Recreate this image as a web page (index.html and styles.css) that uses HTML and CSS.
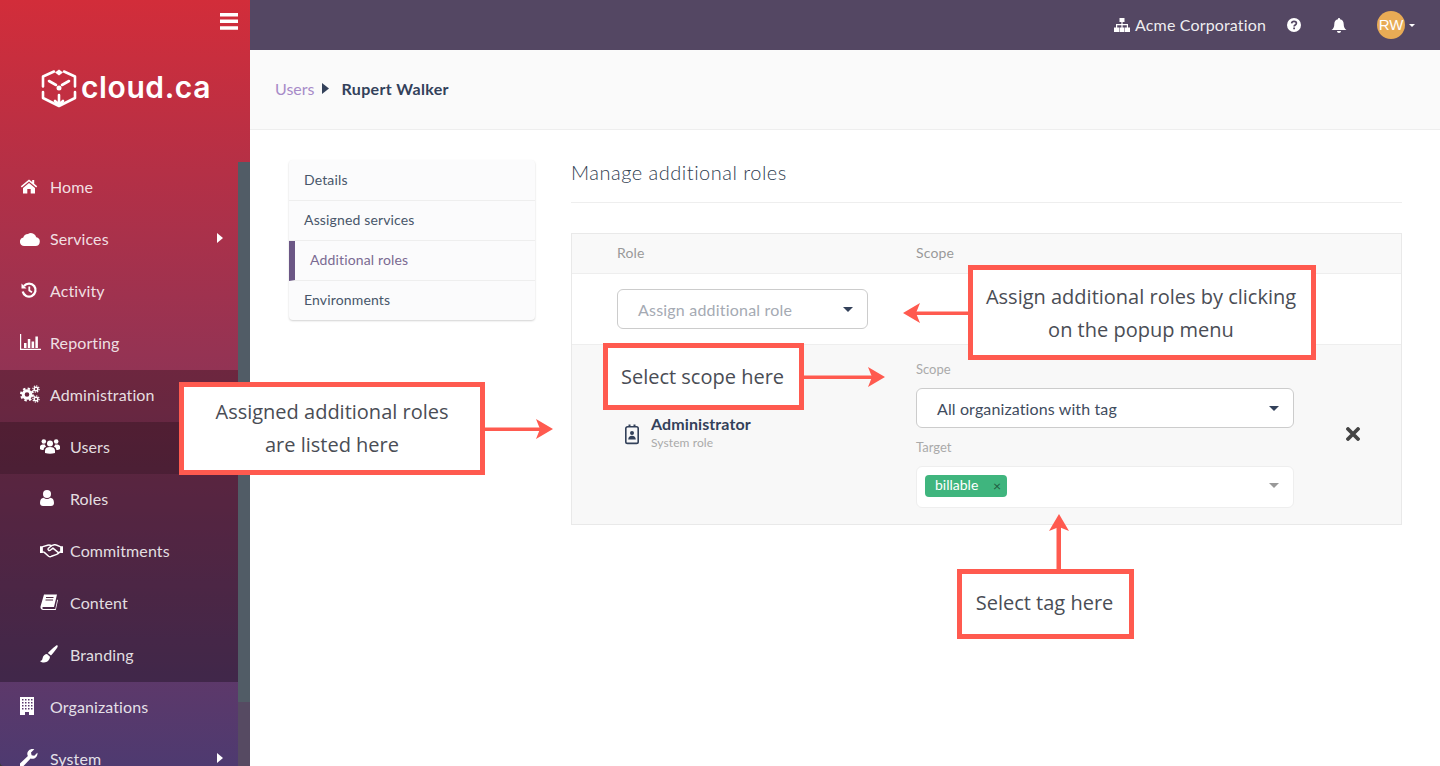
FILE: index.html
```html
<!DOCTYPE html>
<html lang="en">
<head>
  <meta charset="UTF-8">
  <meta name="viewport" content="width=device-width, initial-scale=1.0">
  <title>Rupert Walker - Additional roles</title>
  <link rel="stylesheet" href="styles.css">
</head>
<body>
  <div class="app">
    <aside class="sidebar">
      <div class="brand">
        <div class="menu-toggle">
          <svg width="20" height="17" viewBox="0 0 20 17"><path fill="#fff" d="M1 0h18v3.4H1zM1 6.6h18V10H1zM1 13.300h18v3.400H1z"/></svg>
        </div>
        <div class="logo">
          <svg class="logo-mark" width="38" height="40" viewBox="0 0 38 40" fill="none" stroke="#fff" stroke-width="2.600" stroke-linecap="round" stroke-linejoin="round">
            <path d="M14 3.500 3 8.500v10M24 3.500l11 5v10M3 24v6l16 8 16-8v-6"/>
            <path d="M9 13l7 4M29 13l-7 4M19 27v10M15 33l4 4 4-4"/>
            <path d="M19 1.500l-4 3 4 3 4-3z" fill="#fff" stroke="none"/>
            <circle cx="19" cy="20" r="2.500" fill="#fff" stroke="none"/>
          </svg>
          <span class="logo-text">cloud.ca</span>
        </div>
      </div>
      <div class="sidebar-body">
        <nav class="nav">
          <a class="nav-item">
            <svg class="nav-icon" viewBox="0 0 18 18"><path d="M9 2.500 0.800 9.300l1 1.200L9 4.600l7.200 5.900 1-1.200-3-2.500V3h-2v2.100z"/><path d="M9 6 3 11v5.500h4.300V12h3.400v4.500H15V11z"/></svg>
            Home
          </a>
          <a class="nav-item">
            <svg class="nav-icon icon-wide" viewBox="0 0 20 18"><path d="M4.300 17a4.300 4.300 0 0 1-1-8.500A4.800 4.800 0 0 1 8 5a5.500 5.500 0 0 1 8.300 3.300A4.400 4.400 0 0 1 15.500 17z"/></svg>
            Services
            <svg class="nav-caret" width="6" height="10" viewBox="0 0 6 10"><path d="M0 0l6 5-6 5z"/></svg>
          </a>
          <a class="nav-item">
            <svg class="nav-icon" viewBox="0 0 18 18"><g fill="none" stroke="#fff" stroke-width="2.300"><path d="M4 5a6.500 6.500 0 1 1-1.300 5.500"/><path d="M9.300 5.500v4l2.700 1.700" stroke-width="1.800"/></g><path d="M1.500 2.500v5h5z"/></svg>
            Activity
          </a>
          <a class="nav-item">
            <svg class="nav-icon icon-report" viewBox="0 0 21 18"><path d="M0 1h1.200v14.800H21V17H0z"/><path d="M4 10h2.500v5H4zM7.800 6h2.500v9H7.800zM11.600 8.500h2.500V15h-2.500zM15.400 3.500h2.500V15h-2.500z"/></svg>
            Reporting
          </a>
          <a class="nav-item nav-open">
            <svg class="nav-icon icon-wide" viewBox="0 0 20 18"><g fill="none" stroke="#fff"><circle cx="7" cy="9.500" r="3.800" stroke-width="3"/><circle cx="7" cy="9.500" r="6" stroke-width="2" stroke-dasharray="2.400 2.300"/><circle cx="16" cy="4" r="1.800" stroke-width="1.400"/><circle cx="16" cy="4" r="3.100" stroke-width="1.200" stroke-dasharray="1.300 1.100"/><circle cx="16" cy="14" r="1.800" stroke-width="1.400"/><circle cx="16" cy="14" r="3.100" stroke-width="1.200" stroke-dasharray="1.300 1.100"/></g></svg>
            Administration
          </a>
          <div class="subnav">
            <a class="nav-item sub-item sub-active">
              <svg class="nav-icon icon-wide" viewBox="0 0 20 18"><circle cx="10" cy="6.500" r="3"/><path d="M5 16v-2.500C5 11 7 10 10 10s5 1 5 3.500V16q-5 1.500-10 0z"/><circle cx="3.800" cy="4.500" r="2.300"/><circle cx="16.200" cy="4.500" r="2.300"/><path d="M0 12v-2.500C0 8 1.500 7.400 4 7.400c.3 0 .8 0 1 .1.100 1 .5 1.700 1.100 2.300C4.500 10.300 3.700 11.200 3.600 13 2 13 .8 12.700 0 12zM20 12V9.500C20 8 18.500 7.400 16 7.400c-.3 0-.8 0-1 .1-.1 1-.5 1.700-1.100 2.300 1.600.5 2.400 1.400 2.500 3.200 1.600 0 2.800-.3 3.600-1z"/></svg>
              Users
            </a>
            <a class="nav-item sub-item">
              <svg class="nav-icon" viewBox="0 0 18 18"><circle cx="7" cy="5" r="4"/><path d="M0 14c0-3.500 1.500-5 3.700-5.200C4.600 9.600 5.700 10 7 10s2.400-.4 3.300-1.200C12.500 9 14 10.500 14 14c0 2-1.200 3-3 3H3c-1.800 0-3-1-3-3z"/></svg>
              Roles
            </a>
            <a class="nav-item sub-item">
              <svg class="nav-icon icon-hands" viewBox="0 0 24 18"><path d="M0 5h3v7H0zM21 5h3v7h-3z"/><g fill="none" stroke="#fff" stroke-width="1.500" stroke-linejoin="round" stroke-linecap="round"><path d="M3 5.500 8 4q2-.5 4 .5l3-1q1-.2 2 .3l4 1.700"/><path d="M12 4.500 8.500 7.500q-.5 1 .5 1.800 1 .7 2-.3L13.500 7l6 5 1.500-1"/><path d="M3 11l1.500.5 4.500 4q1.500 1 3 0l5.500-2q1.500-.5 2-1.500"/></g></svg>
              Commitments
            </a>
            <a class="nav-item sub-item">
              <svg class="nav-icon" viewBox="0 0 18 18"><path d="M4 1.500h13l-3 12.500H3.500c-.8 0-1.300 .6-1.100 1.200.1.500.6.800 1.100.8h11.800l2-9.500.7.500-2.200 10H3.300C1.500 17 .2 15.500.5 13.500z"/><path d="M6 4.500h7.500M5.500 7h7.500" stroke="#4f2a40" stroke-width="1.100"/></svg>
              Content
            </a>
            <a class="nav-item sub-item">
              <svg class="nav-icon" viewBox="0 0 18 18"><path d="M17.500.5c.5.500.2 1.500-.5 2.500-1.500 2.300-4 5.300-6 7.500L7.800 8C10 5.800 13 3 15 1.500c1-.8 2-1.400 2.500-1z"/><path d="M7 9l3 2.800c-.2 3-2.500 5.700-6 5.700-1.500 0-3-.5-4-1.500 1.500-.2 2.300-1 2.500-2.500C3 10.500 5 9.200 7 9z"/></svg>
              Branding
            </a>
          </div>
          <a class="nav-item">
            <svg class="nav-icon" viewBox="2 0 18 18"><path fill-rule="evenodd" d="M2 0h14v18h-5v-3H7v3H2zM4 2v1.500h1.500V2zm3 0v1.500h1.500V2zm3 0v1.500h1.500V2zm3 0v1.500h1.500V2zM4 5v1.500h1.500V5zm3 0v1.500h1.500V5zm3 0v1.500h1.500V5zm3 0v1.500h1.500V5zM4 8v1.500h1.500V8zm3 0v1.500h1.500V8zm3 0v1.500h1.500V8zm3 0v1.500h1.500V8zM4 11v1.500h1.500V11zm3 0v1.500h1.500V11zm3 0v1.500h1.500V11zm3 0v1.500h1.500V11z"/></svg>
            Organizations
          </a>
          <a class="nav-item">
            <svg class="nav-icon" viewBox="0 0 18 18"><path d="M17.500 4.500c0 3-2.300 5.300-5.200 5.300-.6 0-1.200-.1-1.700-.3L3.500 17c-1 1-2.400 1-3.200.1-.9-.9-.8-2.200.2-3.200l7.400-7C7.500 6.300 7.300 5.700 7.300 5 7.300 2.200 9.600 0 12.500 0c.6 0 1.300.1 1.800.3l-3.300 3.200.6 2.700 2.700.6 3-3c.1.200.2.500.2.700z"/></svg>
            System
            <svg class="nav-caret" width="6" height="10" viewBox="0 0 6 10"><path d="M0 0l6 5-6 5z"/></svg>
          </a>
        </nav>
        <div class="scrollbar"><div class="scroll-thumb"></div></div>
      </div>
    </aside>

    <div class="main">
      <header class="topbar">
        <svg class="top-icon" width="16" height="14" viewBox="0 0 16 14"><path d="M5.500 0h5v4H8.600v2H14v3.500h2V14h-5V9.500h1.800V7.300H8.600v2.200h1.900V14h-5V9.500h1.900V7.300H3.200v2.200H5V14H0V9.500h2V6h5.400V4H5.500z"/></svg>
        <span class="org-name">Acme Corporation</span>
        <svg class="top-icon help-icon" width="14" height="14" viewBox="0 0 14 14"><circle cx="7" cy="7" r="7"/><path d="M4.600 5.400C4.800 4 5.800 3.300 7 3.300c1.300 0 2.400.8 2.400 2 0 1.700-2.300 1.600-2.300 3.200" fill="none" stroke="#544763" stroke-width="1.700"/><path d="M6.200 9.600H8v1.700H6.200z" fill="#544763"/></svg>
        <svg class="top-icon bell-icon" width="16" height="15" viewBox="0 0 16 15"><path d="M8 0c.6 0 1 .4 1 1v.3c2.300.4 3.700 2.200 3.700 4.600 0 3 .8 4.500 2.800 6.100H.5c2-1.600 2.800-3.100 2.800-6.100C3.300 3.500 4.700 1.700 7 1.300V1c0-.6.400-1 1-1z"/><path d="M6 13h4c0 1.200-.9 2-2 2s-2-.8-2-2z"/></svg>
        <span class="avatar">RW</span>
        <span class="caret avatar-caret"></span>
      </header>

      <div class="crumbs">
        <a class="crumb-link">Users</a>
        <svg class="crumb-sep" width="7" height="11" viewBox="0 0 7 11"><path d="M0 0l7 5.500L0 11z"/></svg>
        <strong class="crumb-current">Rupert Walker</strong>
      </div>

      <div class="content">
        <ul class="tabs">
          <li class="tab">Details</li>
          <li class="tab">Assigned services</li>
          <li class="tab tab-active">Additional roles</li>
          <li class="tab">Environments</li>
        </ul>

        <section class="panel">
          <h2 class="panel-title">Manage additional roles</h2>
          <div class="roles">
            <div class="roles-head">
              <span>Role</span>
              <span>Scope</span>
            </div>
            <div class="roles-add">
              <div class="select select-add">
                <span>Assign additional role</span>
                <span class="caret"></span>
              </div>
            </div>
            <div class="role-row">
              <div class="role-info">
                <svg class="role-icon" width="14" height="22" viewBox="0 0 14 22"><path fill="none" stroke="#33415a" stroke-width="1.600" d="M2.500 3.800h9c.9 0 1.700.8 1.700 1.700v13.200c0 .9-.8 1.700-1.700 1.700h-9c-.9 0-1.700-.8-1.700-1.700V5.500c0-.9.800-1.700 1.700-1.700z"/><path fill="#33415a" d="M3.500 1.500h2v2h-2zM8.500 1.500h2v2h-2z"/><circle fill="#33415a" cx="7" cy="10" r="2"/><path fill="#33415a" d="M3.200 16.500c0-2.300 1.500-3.700 3.800-3.700s3.800 1.400 3.800 3.700z"/></svg>
                <div>
                  <div class="role-name">Administrator</div>
                  <div class="role-type">System role</div>
                </div>
              </div>
              <div class="role-fields">
                <label class="field-label">Scope</label>
                <div class="select select-scope">
                  <span>All organizations with tag</span>
                  <span class="caret"></span>
                </div>
                <label class="field-label">Target</label>
                <div class="tag-box">
                  <span class="tag"><span class="tag-text">billable</span><span class="tag-x">×</span></span>
                  <span class="caret caret-muted"></span>
                </div>
              </div>
              <svg class="role-remove" width="14" height="14" viewBox="0 0 14 14"><path d="M2 2l10 10M12 2 2 12" stroke="#444" stroke-width="3.800" stroke-linecap="round"/></svg>
            </div>
          </div>
        </section>
      </div>
    </div>

    <!-- annotations drawn on top of the screenshot -->
    <svg class="arrows" width="1440" height="766" viewBox="0 0 1440 766">
      <g fill="#ff5a4f">
        <path d="M968 311.500v3.500h-52v-3.500z"/>
        <path d="M903 313l17-10-4 10 4 10z"/>
        <path d="M804 375.500v3.500h70v-3.500z"/>
        <path d="M885 377l-17-10 4 10-4 10z"/>
        <path d="M485 427.500v3.500h56v-3.500z"/>
        <path d="M553 429l-17-10 4 10-4 10z"/>
        <path d="M1056.500 569h4.500v-44h-4.500z"/>
        <path d="M1059 514l-10 17 10-4 10 4z"/>
      </g>
    </svg>
    <div class="callout callout-assign">Assign additional roles by clicking<br>on the popup menu</div>
    <div class="callout callout-scope">Select scope here</div>
    <div class="callout callout-listed">Assigned additional roles<br>are listed here</div>
    <div class="callout callout-tag">Select tag here</div>
  </div>
</body>
</html>
```

FILE: styles.css
```css
html, body {
  margin: 0;
  padding: 0;
}

body {
  font-family: Lato, "Open Sans", sans-serif;
  color: #33415a;
  background: #fff;
}

.app {
  position: relative;
  display: flex;
  width: 1440px;
  height: 766px;
  overflow: hidden;
  background: #3a3a3a;
}

/* sidebar */
.sidebar {
  width: 250px;
  flex-shrink: 0;
  display: flex;
  flex-direction: column;
  background: linear-gradient(180deg, #d22d3a 0%, #4e3a70 100%);
  border-bottom-left-radius: 4px;
}

.brand {
  height: 162px;
  flex-shrink: 0;
}

.menu-toggle {
  display: flex;
  justify-content: flex-end;
  padding: 13px 11px 0 0;
  height: 27px;
}

.logo {
  display: flex;
  align-items: center;
  gap: 3px;
  padding: 28px 0 0 40px;
}

.logo-text {
  font-family: Inter, sans-serif;
  font-size: 30px;
  line-height: 40px;
  font-weight: 600;
  color: #fff;
  letter-spacing: 0.6px;
  margin-top: -3px;
}

.sidebar-body {
  flex: 1;
  display: flex;
  min-height: 0;
}

.nav {
  flex: 1;
  min-width: 0;
}

.nav-item {
  display: flex;
  align-items: center;
  height: 52px;
  padding: 0 15px 4px 20px;
  font-size: 16px;
  letter-spacing: 0.1px;
  color: rgba(255, 255, 255, 0.86);
  box-sizing: border-box;
}

.nav-icon {
  width: 18px;
  height: 18px;
  margin-right: 12px;
  fill: #fff;
  flex-shrink: 0;
}

.icon-wide {
  width: 20px;
  margin-right: 10px;
}

.icon-report {
  width: 21px;
  margin-right: 9px;
}

.icon-hands {
  width: 23px;
  margin-right: 7px;
}

.nav-caret {
  margin-left: auto;
  fill: #fff;
}

.nav-open {
  background: rgba(0, 0, 0, 0.25);
}

.subnav {
  background: rgba(0, 0, 0, 0.3);
}

.sub-item {
  padding-left: 40px;
}

.sub-active {
  background: rgba(0, 0, 0, 0.15);
}

.scrollbar {
  width: 12px;
  flex-shrink: 0;
  background: #564a62;
}

.scroll-thumb {
  height: 540px;
  background: #515c66;
}

/* main column */
.main {
  flex: 1;
  min-width: 0;
  display: flex;
  flex-direction: column;
  background: #fff;
}

.topbar {
  height: 50px;
  flex-shrink: 0;
  display: flex;
  align-items: center;
  background: #544763;
  color: #fff;
  padding-right: 25px;
  justify-content: flex-end;
  box-sizing: border-box;
}

.top-icon {
  fill: #fff;
  flex-shrink: 0;
}

.org-name {
  font-size: 16px;
  margin: -2px 0 0 5px;
  letter-spacing: 0.15px;
  color: rgba(255, 255, 255, 0.92);
}

.help-icon {
  margin-left: 21px;
}

.bell-icon {
  margin-left: 30px;
}

.avatar {
  width: 28px;
  height: 28px;
  margin-left: 30px;
  border-radius: 50%;
  background: #e8ab55;
  color: #fff;
  font-family: "Liberation Sans", sans-serif;
  font-size: 15px;
  line-height: 28px;
  text-align: center;
}

.caret {
  width: 0;
  height: 0;
  border-left: 5px solid transparent;
  border-right: 5px solid transparent;
  border-top: 5px solid #33415a;
}

.avatar-caret {
  margin-left: 4px;
  border-left-width: 3px;
  border-right-width: 3px;
  border-top: 3px solid #fff;
}

.crumbs {
  height: 80px;
  flex-shrink: 0;
  display: flex;
  align-items: center;
  padding: 0 0 2px 25px;
  background: #fafafa;
  border-bottom: 1px solid #eee;
  box-sizing: border-box;
}

.crumb-link {
  font-size: 16px;
  color: #a78bc8;
}

.crumb-sep {
  margin-left: 8px;
  fill: #33415a;
}

.crumb-current {
  margin-left: 12px;
  font-size: 16px;
  letter-spacing: 0.35px;
  font-weight: 700;
  color: #33415a;
}

.content {
  flex: 1;
  display: flex;
  align-items: flex-start;
  padding: 30px 38px 0 39px;
}

/* tabs */
.tabs {
  list-style: none;
  margin: 0;
  padding: 1px 0 0;
  width: 246px;
  flex-shrink: 0;
  background: #fbfbfc;
  border-radius: 4px;
  box-shadow: 0 1px 2px rgba(0, 0, 0, 0.18);
  box-sizing: border-box;
}

.tab {
  height: 40px;
  line-height: 38px;
  padding-left: 15px;
  font-size: 14px;
  letter-spacing: 0.15px;
  color: #48566a;
  border-bottom: 1px solid #eee;
  box-sizing: border-box;
}

.tab:last-child {
  height: 39px;
  border-bottom: none;
}

.tab-active {
  padding-left: 15px;
  border-left: 6px solid #6b5785;
  color: #7a6a92;
}

/* panel */
.panel {
  flex: 1;
  margin-left: 36px;
  min-width: 0;
}

.panel-title {
  margin: 0;
  height: 42px;
  font-size: 20px;
  line-height: 24px;
  font-weight: 300;
  letter-spacing: 0.5px;
  color: #2f3d50;
  border-bottom: 1px solid #eee;
}

.roles {
  margin-top: 30px;
  border: 1px solid #e9e9e9;
}

.roles-head {
  display: grid;
  grid-template-columns: 299px 1fr;
  height: 40px;
  line-height: 37px;
  padding-left: 45px;
  font-size: 14px;
  letter-spacing: 0.15px;
  color: #999;
  background: #f9f9f9;
  border-bottom: 1px solid #eee;
  box-sizing: border-box;
}

.roles-add {
  height: 71px;
  padding: 15px 0 0 45px;
  border-bottom: 1px solid #eee;
  box-sizing: border-box;
}

.select {
  display: flex;
  align-items: center;
  justify-content: space-between;
  height: 40px;
  padding: 0 14px 0 20px;
  background: #fff;
  border: 1px solid #ccc;
  border-radius: 6px;
  font-size: 16px;
  box-sizing: border-box;
}

.select-add {
  width: 251px;
  letter-spacing: 0.2px;
  color: #a5aab3;
}

.role-row {
  display: grid;
  grid-template-columns: 299px 378px 1fr;
  align-items: center;
  height: 179px;
  padding: 0 0 2px 45px;
  background: #f8f8f8;
  box-sizing: border-box;
}

.role-info {
  display: flex;
  align-items: center;
  gap: 12px;
  padding-left: 8px;
}

.role-name {
  font-size: 16px;
  line-height: 19px;
  font-weight: 700;
  letter-spacing: 0.1px;
  color: #33415a;
}

.role-type {
  font-size: 12px;
  line-height: 20px;
  letter-spacing: 0.1px;
  color: #aaa;
}

.field-label {
  display: block;
  font-size: 13px;
  line-height: 18px;
  color: #aaa;
}

.select-scope {
  color: #3f4c5e;
  letter-spacing: 0.12px;
  margin: 10px 0;
  padding-top: 2px;
}

.tag-box {
  display: flex;
  align-items: center;
  justify-content: space-between;
  height: 42px;
  margin-top: 10px;
  padding: 0 14px 2px 8px;
  background: #fff;
  border: 1px solid #eee;
  border-radius: 6px;
  box-sizing: border-box;
}

.tag {
  display: flex;
  justify-content: space-between;
  align-items: center;
  width: 82px;
  height: 22px;
  padding: 0 6px 0 10px;
  background: #3fb57e;
  border-radius: 4px;
  color: #fff;
  font-size: 14px;
  box-sizing: border-box;
}

.tag-text {
  margin-top: -3px;
}

.tag-x {
  font-size: 14px;
  color: #1f5c40;
}

.caret-muted {
  border-top-color: #999;
}

.role-remove {
  margin-left: 52px;
}

/* annotations */
.arrows {
  position: absolute;
  left: 0;
  top: 0;
  pointer-events: none;
}

.callout {
  position: absolute;
  display: flex;
  align-items: center;
  justify-content: center;
  text-align: center;
  background: #fff;
  border: 5px solid #ff5a4f;
  font-family: "Open Sans", sans-serif;
  font-size: 20px;
  line-height: 33px;
  color: #4a4d55;
  box-sizing: border-box;
}

.callout-assign {
  left: 968px;
  top: 265px;
  width: 348px;
  height: 95px;
  padding-right: 2px;
}

.callout-scope {
  left: 603px;
  top: 343px;
  width: 201px;
  height: 67px;
  padding-right: 2px;
}

.callout-listed {
  left: 179px;
  top: 382px;
  width: 306px;
  height: 93px;
  padding-bottom: 2px;
}

.callout-tag {
  left: 957px;
  top: 569px;
  width: 177px;
  height: 70px;
  padding: 0 2px 4px 0;
}
```
